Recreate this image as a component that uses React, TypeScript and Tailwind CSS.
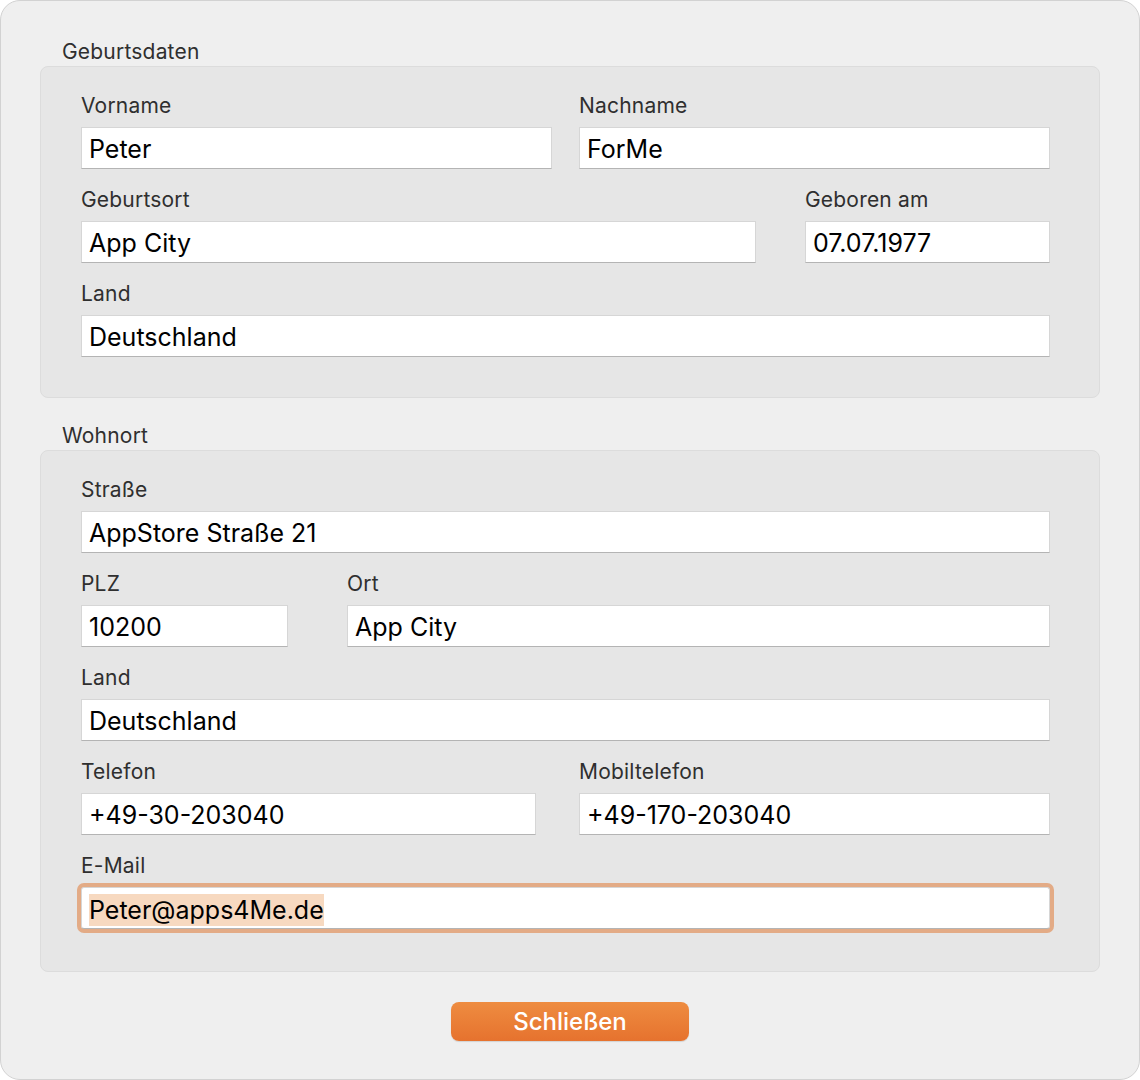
import React from "react";

const font = { fontFamily: "Inter, 'Noto Sans', 'Liberation Sans', sans-serif" };

function Field({
  label,
  value,
  width,
  focused = false,
}: {
  label: string;
  value: string;
  width: string;
  focused?: boolean;
}) {
  return (
    <div className={`flex flex-col ${width}`}>
      <div className="h-[24px] text-[21px] leading-[24px] text-[#2f2f2f] tracking-[0.2px]">{label}</div>
      <div
        className={`mt-[9px] h-[42px] bg-white border border-[#d6d6d6] border-b-[#b4b4b4] flex items-center pl-[7px] pt-[3px] text-[25px] text-black ${
          focused ? "rounded-[3px] shadow-[0_0_0_4px_#e3ab86]" : ""
        }`}
      >
        {focused ? (
          <span className="bg-[#f7d9c0] leading-[32px]">{value}</span>
        ) : (
          <span>{value}</span>
        )}
      </div>
    </div>
  );
}

function Group({
  title,
  children,
  className = "",
  bottom = "pb-[40px]",
}: {
  title: string;
  children: React.ReactNode;
  className?: string;
  bottom?: string;
}) {
  return (
    <div className={className}>
      <div className="pl-[22px] h-[24px] text-[21px] leading-[24px] text-[#2f2f2f] tracking-[0.2px]">{title}</div>
      <div className={`mt-[2px] bg-[#e6e6e6] border border-[#dcdcdc] rounded-[8px] pl-[40px] pr-[49px] pt-[27px] ${bottom} flex flex-col gap-[19px]`}>
        {children}
      </div>
    </div>
  );
}

export default function App() {
  return (
    <div className="w-[1140px] h-[1080px] bg-white" style={font}>
      <div className="w-full h-full bg-[#efefef] rounded-[20px] border border-[#d2d2d2] px-[39px] pt-[39px] flex flex-col">
        <Group title="Geburtsdaten">
          <div className="flex gap-[27px]">
            <Field label="Vorname" value="Peter" width="w-[471px]" />
            <Field label="Nachname" value="ForMe" width="w-[471px]" />
          </div>
          <div className="flex gap-[49px]">
            <Field label="Geburtsort" value="App City" width="w-[675px]" />
            <Field label="Geboren am" value="07.07.1977" width="w-[245px]" />
          </div>
          <div className="flex">
            <Field label="Land" value="Deutschland" width="w-[969px]" />
          </div>
        </Group>

        <Group title="Wohnort" className="mt-[26px]" bottom="pb-[42px]">
          <div className="flex">
            <Field label="Straße" value="AppStore Straße 21" width="w-[969px]" />
          </div>
          <div className="flex gap-[59px]">
            <Field label="PLZ" value="10200" width="w-[207px]" />
            <Field label="Ort" value="App City" width="w-[703px]" />
          </div>
          <div className="flex">
            <Field label="Land" value="Deutschland" width="w-[969px]" />
          </div>
          <div className="flex gap-[43px]">
            <Field label="Telefon" value="+49-30-203040" width="w-[455px]" />
            <Field label="Mobiltelefon" value="+49-170-203040" width="w-[471px]" />
          </div>
          <div className="flex">
            <Field label="E-Mail" value="Peter@apps4Me.de" width="w-[969px]" focused />
          </div>
        </Group>

        <div className="mt-[30px] flex justify-center">
          <button className="w-[238px] h-[39px] rounded-[8px] bg-gradient-to-b from-[#ee8c40] to-[#e6722e] text-white text-[24px] font-medium shadow-[0_1px_1px_rgba(0,0,0,0.12)]">
            Schließen
          </button>
        </div>
      </div>
    </div>
  );
}
